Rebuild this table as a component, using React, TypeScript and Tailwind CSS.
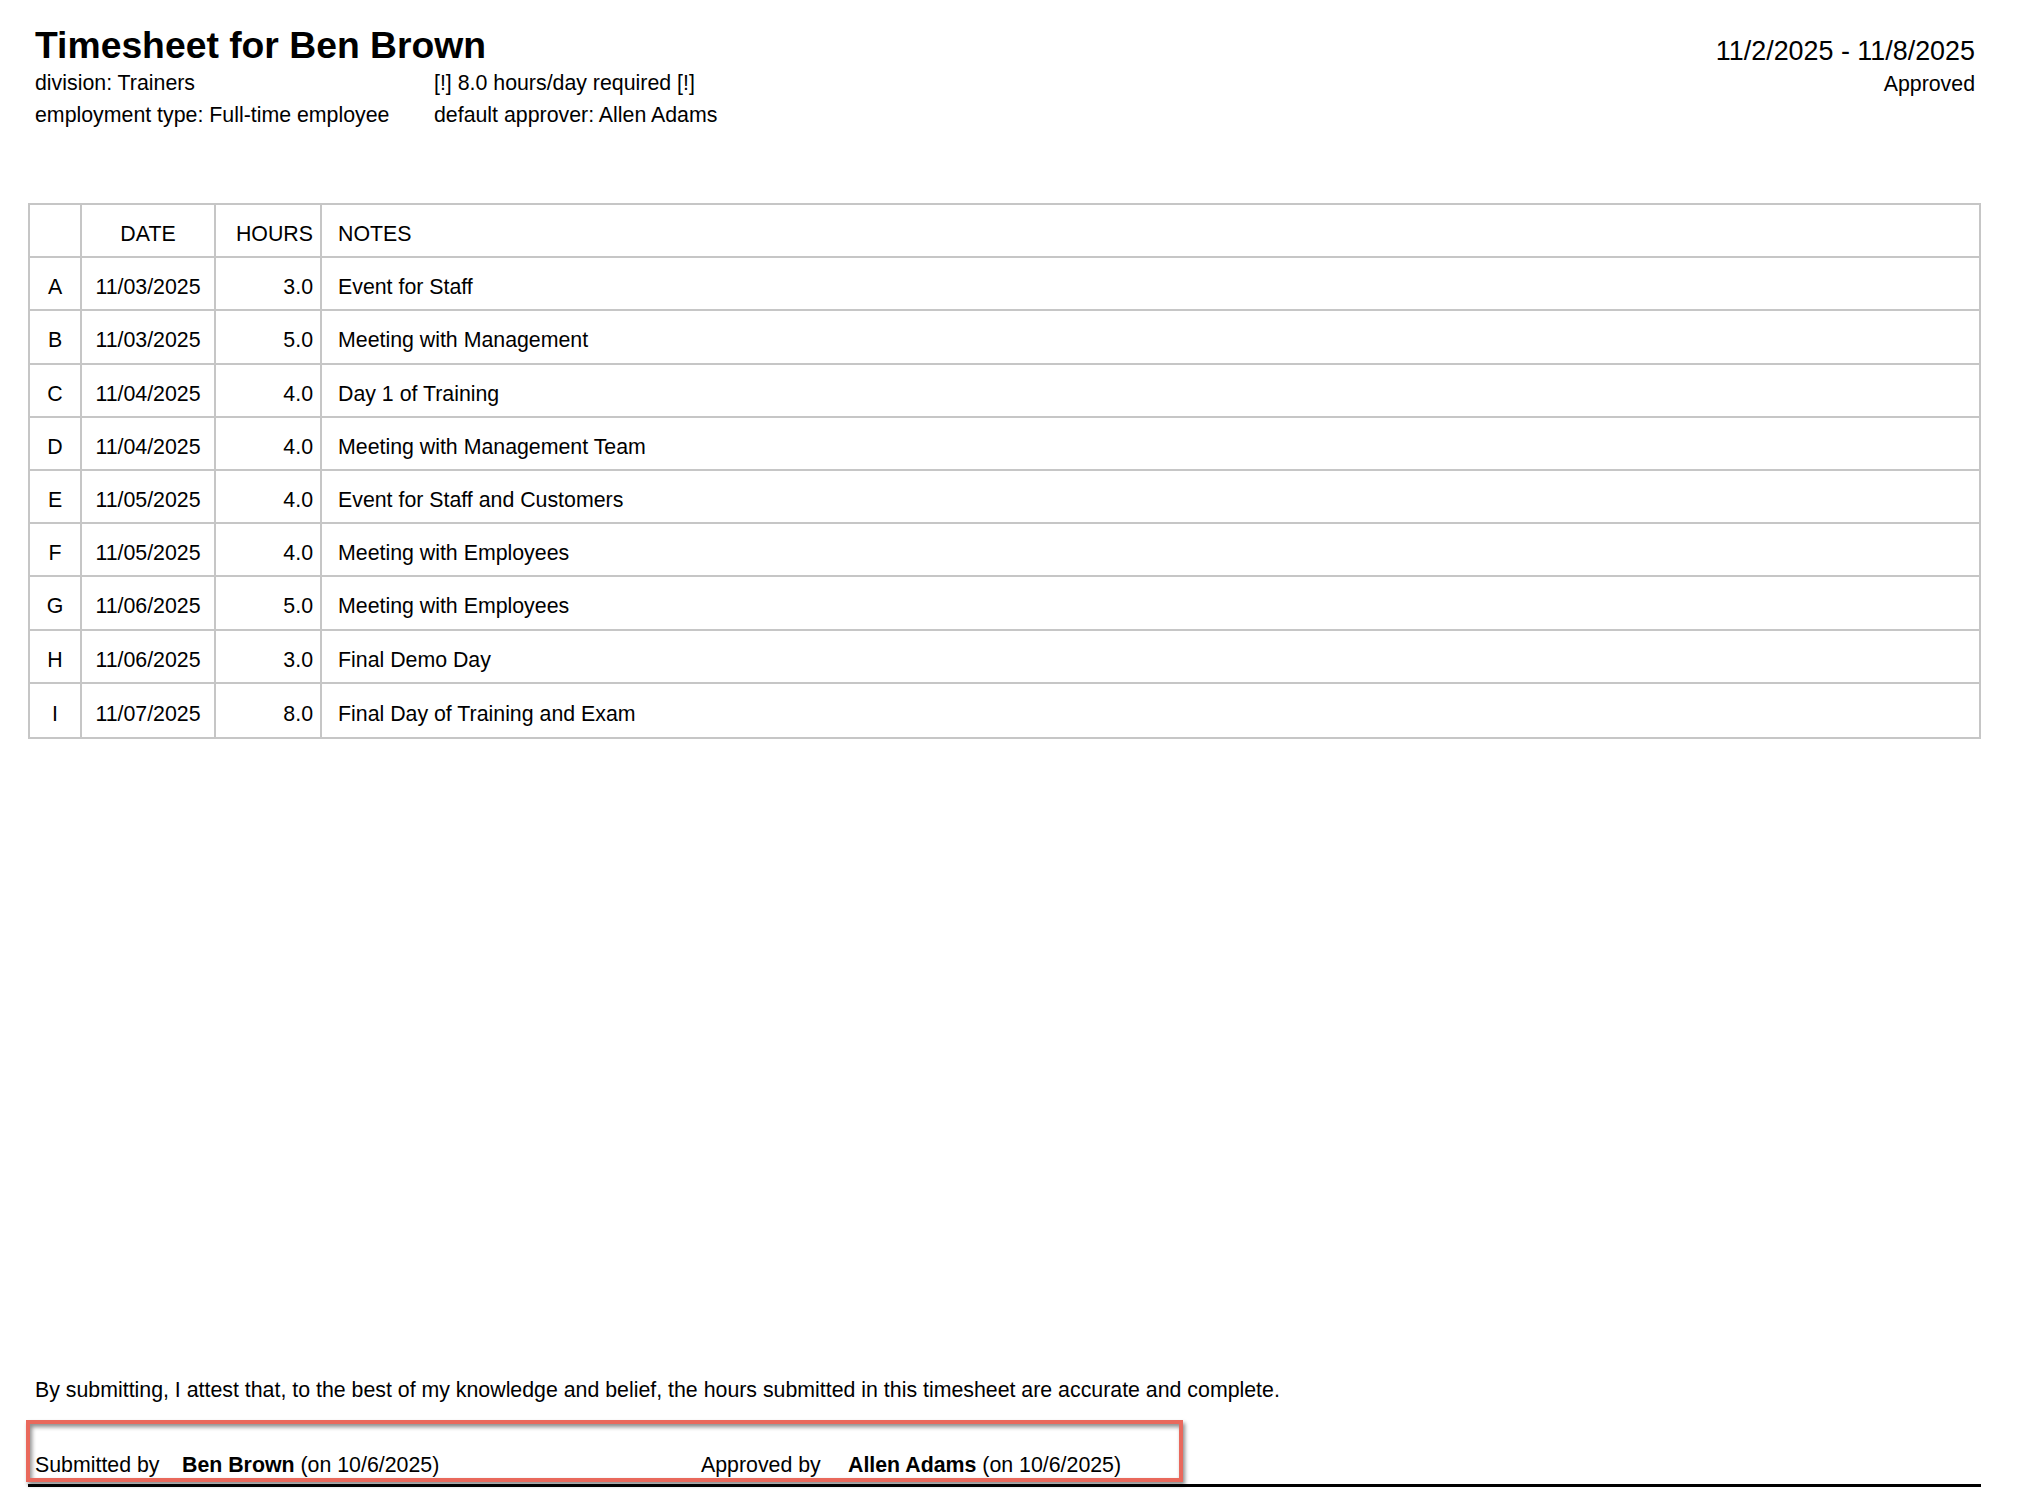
const rows: [string, string, string, string][] = [
  ["A", "11/03/2025", "3.0", "Event for Staff"],
  ["B", "11/03/2025", "5.0", "Meeting with Management"],
  ["C", "11/04/2025", "4.0", "Day 1 of Training"],
  ["D", "11/04/2025", "4.0", "Meeting with Management Team"],
  ["E", "11/05/2025", "4.0", "Event for Staff and Customers"],
  ["F", "11/05/2025", "4.0", "Meeting with Employees"],
  ["G", "11/06/2025", "5.0", "Meeting with Employees"],
  ["H", "11/06/2025", "3.0", "Final Demo Day"],
  ["I", "11/07/2025", "8.0", "Final Day of Training and Exam"],
];

function Row({ cells, last }: { cells: [string, string, string, string]; last: boolean }) {
  return (
    <div
      className={
        "grid grid-cols-[50px_134px_106px_1fr] h-[53.2px] border-[#c6c6c6] " +
        (last ? "" : "border-b-2")
      }
    >
      <div className="flex items-center justify-center pt-[7px]">{cells[0]}</div>
      <div className="flex items-center justify-center pt-[7px] border-l-2 border-[#c6c6c6]">{cells[1]}</div>
      <div className="flex items-center justify-end pt-[7px] pr-[7px] border-l-2 border-[#c6c6c6]">{cells[2]}</div>
      <div className="flex items-center justify-start pt-[7px] pl-[16px] border-l-2 border-[#c6c6c6]">{cells[3]}</div>
    </div>
  );
}

export default function App() {
  return (
    <div className="w-[2024px] h-[1494px] bg-white text-black flex flex-col pl-[28px] pr-[43px] pt-[24px] pb-[7px] font-['Liberation_Sans',Arial,sans-serif] overflow-hidden">
      {/* Header */}
      <div className="flex justify-between pl-[7px] pr-[6px]">
        <div>
          <h1 className="text-[37.3px] leading-[43px] font-bold">Timesheet for Ben Brown</h1>
          <div className="grid grid-cols-[399px_auto] text-[21.33px] leading-[32px]">
            <div>division: Trainers</div>
            <div>[!] 8.0 hours/day required [!]</div>
            <div>employment type: Full-time employee</div>
            <div>default approver: Allen Adams</div>
          </div>
        </div>
        <div className="text-right pt-[10px]">
          <div className="text-[26.9px] leading-[34px]">11/2/2025 - 11/8/2025</div>
          <div className="text-[21.33px] leading-[32px]">Approved</div>
        </div>
      </div>

      {/* Table */}
      <div className="mt-[72px] w-[1953px] border-x-2 border-t-2 border-b-2 border-[#c6c6c6] text-[21.33px] leading-[32px]">
        <Row cells={["", "DATE", "HOURS", "NOTES"]} last={false} />
        {rows.map((r, i) => (
          <Row key={r[0]} cells={r} last={i === rows.length - 1} />
        ))}
      </div>

      {/* Footer */}
      <div className="mt-auto text-[21.33px] leading-[32px]">
        <p className="px-[7px]">
          By submitting, I attest that, to the best of my knowledge and belief, the hours submitted in this timesheet are accurate and complete.
        </p>
        <div className="relative mt-[43px] flex px-[7px] pb-[3px] border-b-[3px] border-black w-[1953px]">
          <div className="flex w-[666px]">
            <span className="w-[147px]">Submitted by</span>
            <span>
              <b>Ben Brown</b> (on 10/6/2025)
            </span>
          </div>
          <div className="flex">
            <span className="w-[147px]">Approved by</span>
            <span>
              <b>Allen Adams</b> (on 10/6/2025)
            </span>
          </div>
          <div className="absolute -top-[29px] -left-[2px] w-[1157px] h-[62px] border-4 border-[#e9695c] shadow-[2px_3px_4px_rgba(0,0,0,0.45),inset_2px_3px_4px_rgba(0,0,0,0.45)] pointer-events-none" />
        </div>
      </div>
    </div>
  );
}
